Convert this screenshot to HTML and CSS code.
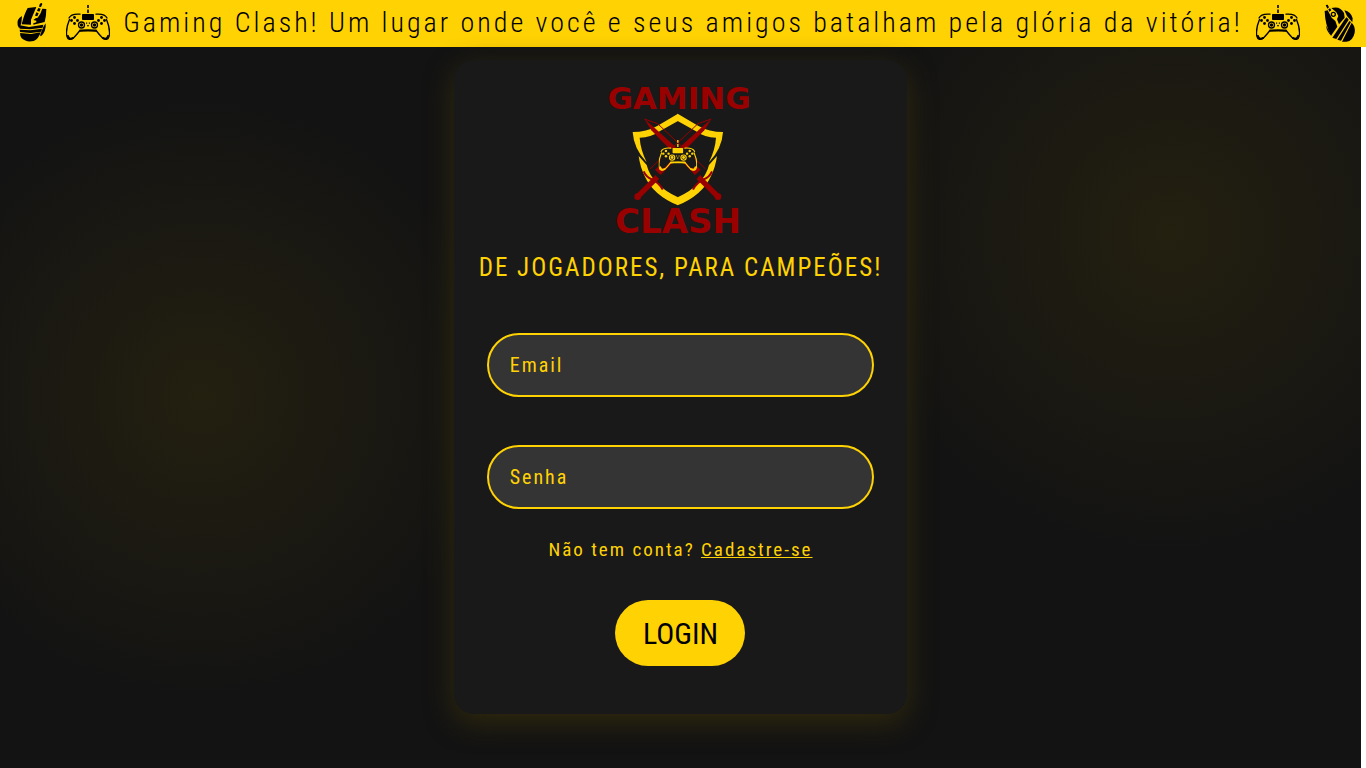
FILE: index.html
```html
<!DOCTYPE html>
<html lang="pt-BR">
<head>
<meta charset="utf-8">
<title>Gaming Clash</title>
<link rel="stylesheet" href="styles.css">
</head>
<body>
<svg class="sprite" aria-hidden="true">
  <symbol id="pad" viewBox="0 0 44 36">
    <g fill="none" stroke="currentColor" stroke-width="1.3" stroke-linecap="round">
      <path d="M22 0V3M22 4.5V8" stroke-width="1.6" stroke-linecap="butt"/>
      <path d="M3 13Q5 8.500 14 9.200M41 13Q39 8.500 30 9.200"/>
      <path d="M3.500 14.500Q-.5 24 .8 31Q2 36 7 33.500Q10.500 30 13.500 26Q22 24.500 30.500 26Q33.500 30 37 33.500Q42 36 43.200 31Q44.500 24 40.500 14.500"/>
      <path d="M2 31Q3 35 7 33M42 31Q41 35 37 33M14 25.500H30" stroke-width="2"/>
      <circle cx="15.500" cy="20" r="3"/><circle cx="28.500" cy="20" r="3"/>
    </g>
    <g fill="currentColor">
      <rect x="16" y="9" width="12" height="6" rx=".8"/>
      <circle cx="15.500" cy="20" r="1.700"/><circle cx="28.500" cy="20" r="1.700"/>
      <circle cx="8.500" cy="12.500" r="1.400"/><circle cx="8.500" cy="18.500" r="1.400"/><circle cx="5.500" cy="15.500" r="1.400"/><circle cx="11.500" cy="15.500" r="1.400"/>
      <circle cx="35.500" cy="12.500" r="1.400"/><circle cx="35.500" cy="18.500" r="1.400"/><circle cx="32.500" cy="15.500" r="1.400"/><circle cx="38.500" cy="15.500" r="1.400"/>
      <path d="M20 17.500h1.200v1.200H20zM22.800 17.500H24v1.200h-1.200zM21 20h2l-1 2z"/>
    </g>
  </symbol>
</svg>

<header class="banner">
  <div class="icons">
    <svg class="mouse" viewBox="45 10 96 120" aria-hidden="true">
      <path d="M80 25L106 22L90 60V75L62 74Q70 42 80 25Z"/>
      <path d="M124 27L136 28Q136 48 131 67L97 75V71L106 68V63L97 61L104 56L110 54L118 42Z"/>
      <path d="M116 14L121 9L124 13L120 22L114 21ZM112 25L119 27L115 36L108 33ZM106 38L113 41L109 50L102 48Z"/>
      <path d="M63 49Q46 58 50 77L55 87L61 70ZM134 71Q136 96 120 110L117 107L128 80Z"/>
      <path d="M57 77L84 82L127 75L125 84L88 89L57 87ZM56 90L88 92L123 87L121 96L89 100L57 97ZM57 100L90 103L119 98Q113 118 98 124Q76 129 62 116Q57 110 57 100Z"/>
    </svg>
    <svg class="pad" aria-hidden="true"><use href="#pad"/></svg>
  </div>
  <p class="banner-text">Gaming Clash! Um lugar onde você e seus amigos batalham pela glória da vitória!</p>
  <div class="icons icons-end">
    <svg class="pad" aria-hidden="true"><use href="#pad"/></svg>
    <svg class="mouse" viewBox="36 12 96 120" aria-hidden="true">
      <path d="M41 36L50 34L62 56L73 66L79 83L60 110Q42 78 41 36Z"/>
      <path d="M61 27Q88 20 99 42L101 56L84 76L78 61L82 51L76 40Z"/>
      <path d="M44 18L50 17L54 25L49 29ZM52 31L57 28L61 34L55 38Z"/>
      <circle cx="67" cy="46" r="6" fill="none" stroke="#000" stroke-width="4"/>
      <path d="M100 34Q120 38 125 58L124 70L108 51ZM45 79Q47 100 62 111L57 103Z"/>
      <path d="M102 60L107 55L113 62L76 120L64 116ZM115 66L120 69L90 125L79 122ZM122 71Q134 83 131 101Q126 126 106 128H93Z"/>
    </svg>
  </div>
</header>

<main class="page">
  <form class="card">
    <svg class="logo" viewBox="0 0 170 170" role="img" aria-label="Gaming Clash">
      <text class="logo-text" x="84" y="34" font-size="31">GAMING</text>
      <g transform="scale(.33333)">
        <g id="half">
          <path class="gold" d="M249 116L188 152Q154 171 113 171Q116 221 155 262Q136 222 134 188Q168 188 194 169L249 138Z"/>
          <path class="gold" d="M131 243L155 270Q170 330 249 367V391Q175 360 150 305Q135 275 131 243Z"/>
        </g>
        <use href="#half" transform="matrix(-1 0 0 1 497 0)"/>
        <g id="sword">
          <path class="red" d="M148 132L169 166L300 300L317 284L176 156Z"/>
          <path class="red-line" d="M148 132L188 146L332 282"/>
          <path class="grip" d="M310 306L366 362"/>
          <circle class="red" cx="369" cy="365" r="10"/>
          <path class="guard" d="M351 289Q344 306 325 314Q304 324 294 344"/>
        </g>
        <use href="#sword" transform="matrix(-1 0 0 1 497 0)"/>
        <path d="M207 220H289L304 276L288 280L270 260H226L207 280L192 276Z" fill="#191919"/>
        <svg class="gold-pad" x="190" y="195" width="117" height="95"><use href="#pad"/></svg>
      </g>
      <text class="logo-text" x="83" y="158" font-size="34">CLASH</text>
    </svg>
    <h1 class="tagline">DE JOGADORES, PARA CAMPEÕES!</h1>
    <input class="field" type="email" placeholder="Email" aria-label="Email">
    <input class="field" type="password" placeholder="Senha" aria-label="Senha">
    <p class="signup">Não tem conta? <a href="#">Cadastre-se</a></p>
    <button class="login" type="button">LOGIN</button>
  </form>
</main>
</body>
</html>
```
FILE: styles.css
```css
* { box-sizing: border-box; }
body {
  margin: 0;
  min-height: 100vh;
  display: flex;
  flex-direction: column;
  background: #fff;
  color: #ffd204;
  font-family: "Roboto Condensed", Roboto, sans-serif;
}
.sprite { position: absolute; width: 0; height: 0; }
.banner {
  display: flex;
  align-items: center;
  justify-content: space-between;
  height: 47px;
  padding: 0 11px 2px 16px;
  background: #ffd204;
  color: #000;
}
.icons { display: flex; align-items: center; gap: 18px; }
.icons-end { gap: 23px; }
.banner-text {
  margin: 0;
  font-size: 28px;
  font-weight: 300;
  letter-spacing: 3px;
  white-space: nowrap;
}
.mouse { width: 32px; height: 40px; }
.pad { width: 44px; height: 36px; }
.page {
  flex: 1;
  display: flex;
  justify-content: center;
  align-items: flex-start;
  margin-right: 5px;
  padding: 13px 0 54px;
  background:
    radial-gradient(circle at 200px 350px, #232010 0, transparent 300px),
    radial-gradient(circle at 1170px 185px, #232010 0, transparent 320px),
    #131313;
}
.card {
  display: flex;
  flex-direction: column;
  align-items: center;
  width: 33.33%;
  min-width: 440px;
  padding: 15px 33px 48px;
  border-radius: 20px;
  background: #191919;
  box-shadow: 0 8px 28px #302a0d;
}
.logo { width: 170px; height: 170px; }
.logo-text {
  font-family: "DejaVu Sans", sans-serif;
  font-weight: 700;
  fill: #990000;
  text-anchor: middle;
}
.gold { fill: #ffd204; }
.gold-pad { color: #ffd204; }
.red { fill: #990000; }
.red-line { fill: none; stroke: #990000; stroke-width: 3; }
.guard { fill: none; stroke: #990000; stroke-width: 6; }
.grip { fill: none; stroke: #990000; stroke-width: 16; }
.tagline {
  margin: 6px 0 48px;
  font-size: 25px;
  line-height: 34px;
  font-weight: 400;
  letter-spacing: 2px;
  white-space: nowrap;
}
.field {
  width: 100%;
  height: 64px;
  margin: 0 0 48px;
  padding: 0 21px;
  border: 2px solid #ffd204;
  border-radius: 32px;
  background: #343434;
  color: #ffd204;
  font: inherit;
  font-size: 20px;
  letter-spacing: 2px;
}
.field::placeholder { color: #ffd204; opacity: 1; }
.field + .field { margin-bottom: 28px; }
.signup {
  margin: 0 0 37px;
  font-size: 19px;
  line-height: 26px;
  letter-spacing: 2px;
}
.signup a { color: inherit; }
.login {
  width: 130px;
  height: 66px;
  padding: 0;
  border: 0;
  border-radius: 33px;
  background: #ffd204;
  color: #000;
  font: inherit;
  font-size: 30px;
}
```
